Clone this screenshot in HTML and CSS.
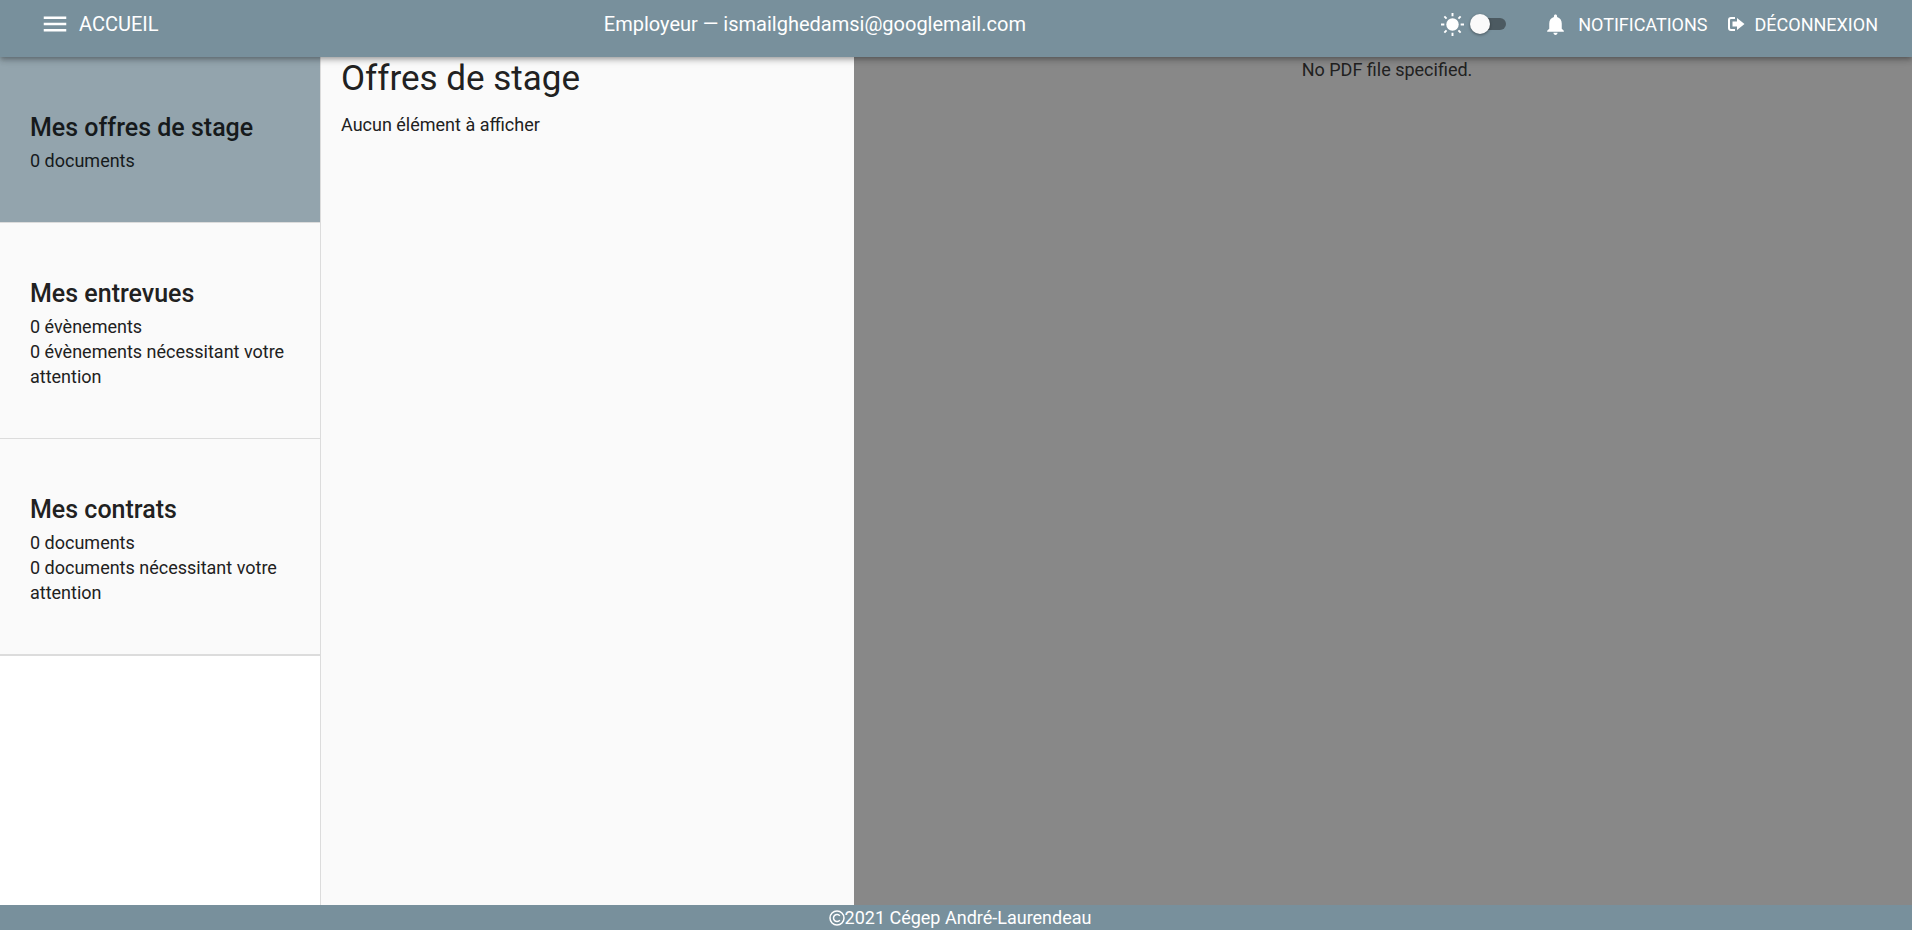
FILE: index.html
```html
<!DOCTYPE html>
<html lang="fr">
<head>
<meta charset="utf-8">
<meta name="viewport" content="width=device-width, initial-scale=1">
<title>Offres de stage</title>
<link rel="stylesheet" href="styles.css">
</head>
<body>
<div class="app">
  <header class="topbar">
    <nav class="topbar-start">
      <button class="nav-button home" type="button">
        <svg class="icon-menu" viewBox="0 0 24 24" aria-hidden="true"><path d="M3 18h18v-2H3v2zm0-5h18v-2H3v2zm0-7v2h18V6H3z"/></svg>
        <span>ACCUEIL</span>
      </button>
    </nav>
    <p class="account">Employeur — ismailghedamsi@googlemail.com</p>
    <div class="topbar-end">
      <label class="theme">
        <svg class="icon-sun" viewBox="0 0 24 24" aria-hidden="true"><circle cx="12" cy="12" r="6.5"/><path d="M11 0h2v3.500h-2zM11 20.500h2V24h-2zM0 11h3.500v2H0zM20.500 11H24v2h-3.500zM2.800 4.200l1.400-1.400 2.300 2.300-1.400 1.400zM17.500 5.100l2.300-2.300 1.400 1.400-2.300 2.300zM17.500 18.900l1.400-1.400 2.300 2.300-1.400 1.400zM2.800 19.800l2.300-2.300 1.400 1.400-2.300 2.300z"/></svg>
        <input class="switch" type="checkbox" role="switch" aria-label="Thème sombre">
      </label>
      <button class="nav-button notifications" type="button">
        <svg class="icon-bell" viewBox="0 0 24 24" aria-hidden="true"><path d="M12 22c1.100 0 2-.9 2-2h-4c0 1.100.89 2 2 2zm6-6v-5c0-3.070-1.640-5.640-4.500-6.320V4c0-.83-.67-1.500-1.500-1.500s-1.500.67-1.500 1.500v.68C7.630 5.360 6 7.920 6 11v5l-2 2v1h16v-1l-2-2z"/></svg>
        <span>NOTIFICATIONS</span>
      </button>
      <button class="nav-button logout" type="button">
        <svg class="icon-exit" viewBox="0 0 17 14" aria-hidden="true"><path class="door" d="M7 1H3a2 2 0 0 0-2 2v8a2 2 0 0 0 2 2h4"/><path d="M4.500 4.500H9V1l7.500 6L9 13V9.500H4.500z"/></svg>
        <span>DÉCONNEXION</span>
      </button>
    </div>
  </header>
  <main class="content">
    <nav class="sidebar">
      <button class="section selected" type="button">
        <span class="section-title">Mes offres de stage</span>
        <span>0 documents</span>
      </button>
      <button class="section" type="button">
        <span class="section-title">Mes entrevues</span>
        <span>0 évènements</span>
        <span>0 évènements nécessitant votre attention</span>
      </button>
      <button class="section" type="button">
        <span class="section-title">Mes contrats</span>
        <span>0 documents</span>
        <span>0 documents nécessitant votre attention</span>
      </button>
    </nav>
    <section class="offers">
      <h1 class="offers-title">Offres de stage</h1>
      <p>Aucun élément à afficher</p>
    </section>
    <section class="viewer">No PDF file specified.</section>
  </main>
  <footer class="footer">
    <svg class="icon-copyright" viewBox="0 0 16 16" aria-hidden="true"><circle cx="8" cy="8" r="7"/><path d="M10.800 5.900a3.500 3.500 0 1 0 0 4.200"/></svg>
    <span>2021 Cégep André-Laurendeau</span>
  </footer>
</div>
</body>
</html>
```
FILE: styles.css
```css
* {
  box-sizing: border-box;
}

body {
  margin: 0;
  font: 400 18px/25px Roboto, "Liberation Sans", sans-serif;
  color: #212121;
  background: #fff;
}

h1,
p {
  margin: 0;
}

svg {
  flex: none;
  fill: currentColor;
}

button {
  font: inherit;
  color: inherit;
  border: 0;
  cursor: pointer;
}

.app {
  display: flex;
  flex-direction: column;
  min-height: 100vh;
}

.topbar {
  position: relative;
  z-index: 1;
  display: flex;
  align-items: center;
  justify-content: space-between;
  padding: 0 32px 9px 40px;
  min-height: 57px;
  color: #fff;
  background: #78909c;
  box-shadow: 0 2px 4px -1px rgba(0, 0, 0, .2), 0 4px 5px rgba(0, 0, 0, .14), 0 1px 10px rgba(0, 0, 0, .12);
}

.nav-button {
  display: flex;
  align-items: center;
  padding: 0;
  background: none;
}

.home {
  gap: 9px;
  padding-right: 30px;
  font-size: 20px;
}

.icon-menu {
  width: 30px;
  height: 30px;
}

.account {
  font-size: 20px;
}

.topbar-end,
.theme {
  display: flex;
  align-items: center;
}

.theme {
  gap: 6px;
}

.icon-sun {
  width: 23px;
  height: 23px;
}

.switch {
  appearance: none;
  display: flex;
  align-items: center;
  width: 36px;
  height: 12px;
  margin: 0;
  border-radius: 6px;
  background: linear-gradient(#4c5a61, #4c5a61) right / 28px 12px no-repeat;
  cursor: pointer;
}

.switch::before {
  content: "";
  width: 20px;
  height: 20px;
  flex: none;
  border-radius: 50%;
  background: #fafafa;
  box-shadow: 0 1px 3px rgba(0, 0, 0, .4);
}

.switch:checked::before {
  margin-left: 16px;
}

.notifications {
  gap: 10px;
  margin-left: 37px;
}

.icon-bell {
  width: 25px;
  height: 25px;
}

.logout {
  gap: 10px;
  margin-left: 20px;
  padding-right: 2px;
}

.icon-exit {
  width: 17px;
  height: 14px;
}

.door {
  fill: none;
  stroke: currentColor;
  stroke-width: 2;
}

.content {
  flex: 1;
  display: grid;
  grid-template-columns: 321px minmax(0, 533fr) minmax(0, 1058fr);
}

.sidebar {
  border-right: 1px solid #dcdcdc;
}

.section {
  display: flex;
  flex-direction: column;
  width: 100%;
  padding: 50px 30px 49px;
  text-align: left;
  background: #fafafa;
  border-bottom: 1px solid #dcdcdc;
}

.section:last-child {
  border-bottom-width: 2px;
}

.selected {
  color: #161a1c;
  background: #93a4ad;
}

.section-title {
  font-size: 25px;
  font-weight: 500;
  line-height: 41px;
}

.offers {
  padding: 0 20px;
  background: #fafafa;
}

.offers-title {
  margin-bottom: 12px;
  font-size: 35px;
  font-weight: 400;
  line-height: 43px;
}

.viewer {
  padding-left: 8px;
  text-align: center;
  background: #888;
}

.footer {
  display: flex;
  align-items: center;
  justify-content: center;
  padding-left: 8px;
  color: #fff;
  background: #78909c;
}

.icon-copyright {
  width: 16px;
  height: 16px;
  fill: none;
  stroke: currentColor;
  stroke-width: 1.5;
}
```
